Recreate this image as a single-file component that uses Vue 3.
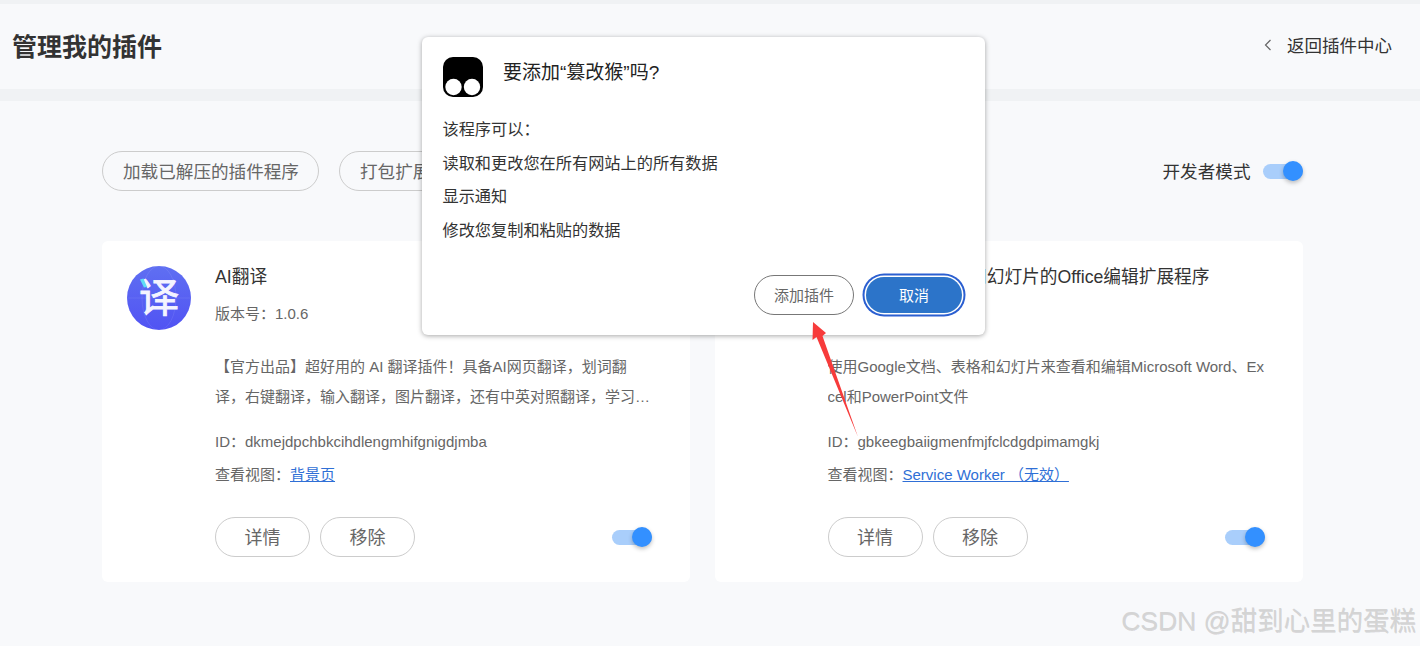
<template>
  <div class="page">
    <header class="top">
      <h1 class="top__title">管理我的插件</h1>
      <a class="top__back">
        <svg width="10" height="14" viewBox="0 0 10 14" fill="none" stroke="#666" stroke-width="1.2">
          <polyline points="7.5 2 2.5 7 7.5 12" />
        </svg>
        <span>返回插件中心</span>
      </a>
    </header>

    <main class="content">
      <div class="toolbar">
        <div class="toolbar__btns">
          <button v-for="b in toolbarButtons" :key="b" class="pill pill--wide" type="button">{{ b }}</button>
        </div>
        <div class="dev">
          <span class="dev__label">开发者模式</span>
          <span class="switch"><i></i></span>
        </div>
      </div>

      <div class="cards">
        <section v-for="p in plugins" :key="p.id" class="card">
          <div class="card__icon">
            <svg v-if="p.logo" width="64" height="64" viewBox="0 0 64 64">
              <defs>
                <linearGradient id="logoFill" x1="0" y1="0" x2="0" y2="1">
                  <stop offset="0" stop-color="#5f6ff2" />
                  <stop offset="1" stop-color="#5153f3" />
                </linearGradient>
              </defs>
              <circle cx="32" cy="32" r="32" fill="url(#logoFill)" />
              <ellipse cx="32" cy="32" rx="17" ry="32" fill="none" stroke="#fff" stroke-opacity=".08" />
              <path d="M0 32h64" stroke="#fff" stroke-opacity=".08" />
              <text x="32" y="46" text-anchor="middle" class="logo-char">译</text>
              <path d="M13 13.5l3.5-1 3.5 8.5-3 .5z" fill="#5fdcf5" />
            </svg>
          </div>
          <div class="card__body">
            <div class="card__title">{{ p.name }}</div>
            <div class="card__version">版本号：{{ p.version }}</div>
            <p class="card__desc">{{ p.desc }}</p>
            <div class="card__id">ID：{{ p.id }}</div>
            <div class="card__view">查看视图：<a>{{ p.view }}</a></div>
            <div class="card__foot">
              <button class="pill" type="button">详情</button>
              <button class="pill" type="button">移除</button>
              <span class="switch switch--card"><i></i></span>
            </div>
          </div>
        </section>
      </div>
    </main>

    <div class="dialog">
      <div class="dialog__head">
        <svg width="40" height="40" viewBox="0 0 40 40">
          <rect width="40" height="40" rx="10" fill="#000" />
          <circle cx="10.5" cy="30" r="8.2" fill="#fff" />
          <circle cx="29" cy="30" r="8.2" fill="#fff" />
        </svg>
        <span class="dialog__title">要添加“篡改猴”吗?</span>
      </div>
      <ul class="dialog__list">
        <li v-for="line in permissions" :key="line">{{ line }}</li>
      </ul>
      <div class="dialog__foot">
        <button class="dialog__add" type="button">添加插件</button>
        <button class="dialog__cancel" type="button">取消</button>
      </div>
    </div>

    <svg class="arrow" width="60" height="125" viewBox="0 0 60 125">
      <polygon points="3,2 16,13 12.5,16 48,117 6.5,17 2.5,20" fill="#f73b3b" />
    </svg>

    <div class="watermark">CSDN @甜到心里的蛋糕</div>
  </div>
</template>

<script setup>
const toolbarButtons = ['加载已解压的插件程序', '打包扩展程序', '更新']

const permissions = ['该程序可以：', '读取和更改您在所有网站上的所有数据', '显示通知', '修改您复制和粘贴的数据']

const plugins = [
  {
    name: 'AI翻译',
    version: '1.0.6',
    logo: true,
    desc: '【官方出品】超好用的 AI 翻译插件！具备AI网页翻译，划词翻译，右键翻译，输入翻译，图片翻译，还有中英对照翻译，学习外语更轻松，阅读外文网站更方便。',
    id: 'dkmejdpchbkcihdlengmhifgnigdjmba',
    view: '背景页'
  },
  {
    name: '可编辑文档、表格和幻灯片的Office编辑扩展程序',
    version: '1.0.0',
    logo: false,
    desc: '使用Google文档、表格和幻灯片来查看和编辑Microsoft Word、Excel和PowerPoint文件',
    id: 'gbkeegbaiigmenfmjfclcdgdpimamgkj',
    view: 'Service Worker （无效）'
  }
]
</script>

<style>
body {
  background: #f8f9fb;
}
</style>

<style scoped>
.page {
  position: relative;
  height: 646px;
  overflow: hidden;
  background: #f8f9fb;
  font-family: "Liberation Sans", "Noto Sans CJK SC", sans-serif;
  color: #666;
}

.top {
  display: flex;
  align-items: center;
  justify-content: space-between;
  height: 81px;
  padding: 0 28px 4px 12px;
  border-top: 4px solid #f0f2f4;
  border-bottom: 12px solid #f0f2f4;
}

.top__title {
  margin: 0;
  font-size: 25px;
  font-weight: 700;
  color: #333;
}

.top__back {
  display: flex;
  align-items: center;
  gap: 14px;
  font-size: 17.5px;
  color: #333;
}

.content {
  padding: 50px 117.5px 0 102px;
}

.toolbar {
  display: flex;
  align-items: center;
  justify-content: space-between;
}

.toolbar__btns {
  display: flex;
  gap: 20px;
}

.pill {
  width: 95px;
  height: 40px;
  padding: 0 0 2px;
  border: 1px solid #ccc;
  border-radius: 20px;
  background: transparent;
  font-family: inherit;
  font-size: 18px;
  color: #666;
}

.pill--wide {
  width: auto;
  padding: 0 19px 2px 20px;
  font-size: 17.6px;
}

.dev {
  display: flex;
  align-items: center;
  gap: 12px;
  font-size: 17.6px;
  color: #333;
}

.dev__label {
  padding-bottom: 2px;
}

.switch {
  position: relative;
  display: block;
  width: 40px;
  height: 15px;
  border-radius: 8px;
  background: #a9cefb;
}

.switch i {
  position: absolute;
  top: -3px;
  right: 0;
  width: 20px;
  height: 20px;
  border-radius: 50%;
  background: #3390ff;
  box-shadow: 0 2px 4px rgba(0, 0, 0, 0.25);
}

.switch--card {
  margin-left: auto;
}

.cards {
  display: grid;
  grid-template-columns: 588px 588px;
  gap: 24.5px;
  margin-top: 50px;
}

.card {
  display: flex;
  gap: 24px;
  height: 341px;
  box-sizing: border-box;
  padding: 25px 38px 25px 25px;
  border-radius: 6px;
  background: #fff;
}

.card__icon {
  flex: 0 0 64px;
  height: 64px;
}

.logo-char {
  font-size: 40px;
  fill: #f4f4ff;
  stroke: #f4f4ff;
  stroke-width: 0.9;
}

.card__body {
  flex: 1;
  min-width: 0;
  display: flex;
  flex-direction: column;
  font-size: 15px;
}

.card__title {
  height: 22px;
  line-height: 22px;
  font-size: 17.7px;
  color: #333;
  white-space: nowrap;
}

.card__version {
  margin-top: 14px;
  line-height: 24px;
}

.card__desc {
  margin: 26px 0 0;
  height: 60px;
  line-height: 30px;
  word-break: break-all;
  display: -webkit-box;
  -webkit-box-orient: vertical;
  -webkit-line-clamp: 2;
  overflow: hidden;
}

.card__id {
  margin-top: 19px;
  line-height: 24px;
}

.card__view {
  margin-top: 9px;
  line-height: 24px;
}

.card__view a {
  color: #2f6fd6;
  text-decoration: underline;
}

.card__foot {
  display: flex;
  align-items: center;
  gap: 10px;
  margin-top: 30px;
}

.dialog {
  position: absolute;
  top: 37px;
  left: 422px;
  width: 563px;
  height: 298px;
  box-sizing: border-box;
  padding: 20px 21px;
  border-radius: 6px;
  background: #fff;
  box-shadow: 0 1px 5px rgba(0, 0, 0, 0.35);
  display: flex;
  flex-direction: column;
}

.dialog__head {
  display: flex;
  align-items: flex-start;
  gap: 20px;
}

.dialog__title {
  margin-top: 4px;
  font-size: 19px;
  line-height: 24px;
  color: #222;
}

.dialog__list {
  margin: 16px 0 0 -0.5px;
  padding: 0;
  list-style: none;
  font-size: 16.2px;
  line-height: 33.5px;
  color: #333;
}

.dialog__foot {
  display: flex;
  justify-content: flex-end;
  align-items: center;
  gap: 12px;
  margin-top: auto;
  padding-right: 2px;
}

.dialog__add {
  width: 100px;
  height: 40px;
  padding: 0 0 1px;
  border: 1px solid #777;
  border-radius: 20px;
  background: #fff;
  font-family: inherit;
  font-size: 15px;
  color: #666;
}

.dialog__cancel {
  width: 96px;
  height: 36px;
  padding: 0 0 1px;
  border: 0;
  border-radius: 18px;
  background: #2c74c9;
  box-shadow: 0 0 0 1.5px #fff, 0 0 0 3.5px #2b5fd1;
  font-family: inherit;
  font-size: 15px;
  color: #fff;
}

.arrow {
  position: absolute;
  top: 320px;
  left: 810px;
}

.watermark {
  position: absolute;
  top: 599px;
  right: 4px;
  font-size: 26.5px;
  color: #d4d4d4;
  text-shadow: 0.5px 0.5px 0.5px rgba(0, 0, 0, 0.12);
  white-space: nowrap;
}
</style>
